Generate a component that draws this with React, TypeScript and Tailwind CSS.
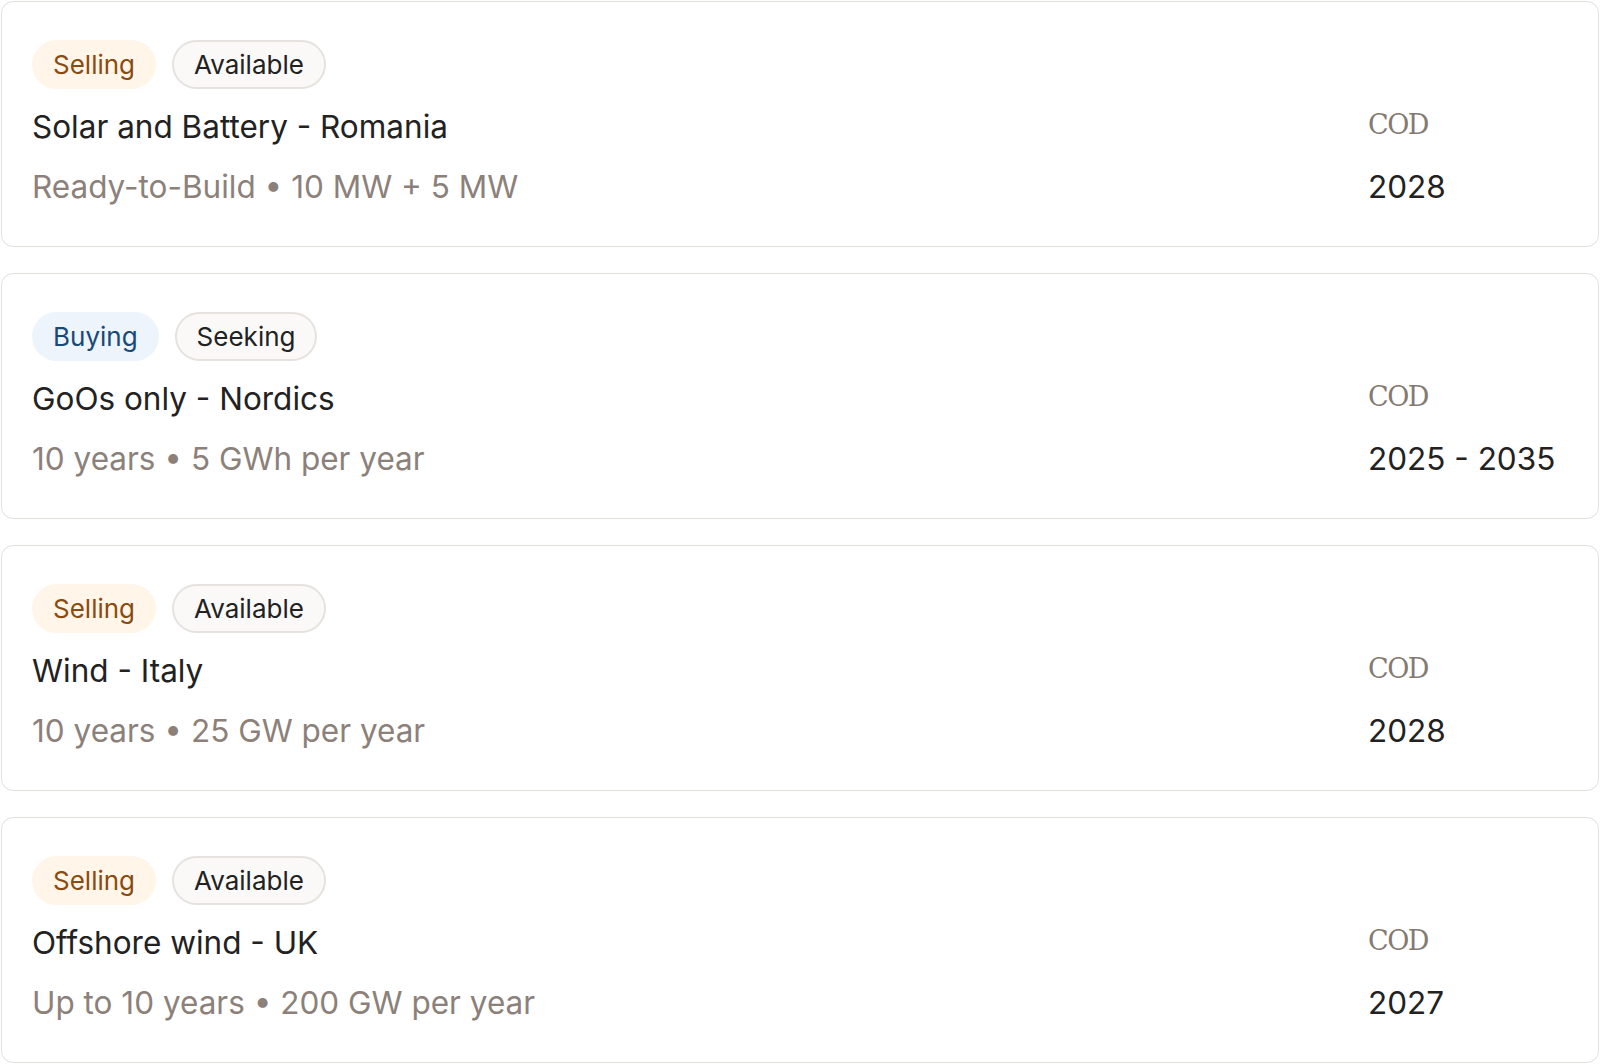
import React from 'react';

type Listing = {
  side: 'Selling' | 'Buying';
  status: string;
  title: string;
  meta: [string, string];
  cod: string;
};

const listings: Listing[] = [
  { side: 'Selling', status: 'Available', title: 'Solar and Battery - Romania', meta: ['Ready-to-Build', '10 MW + 5 MW'], cod: '2028' },
  { side: 'Buying', status: 'Seeking', title: 'GoOs only - Nordics', meta: ['10 years', '5 GWh per year'], cod: '2025 - 2035' },
  { side: 'Selling', status: 'Available', title: 'Wind - Italy', meta: ['10 years', '25 GW per year'], cod: '2028' },
  { side: 'Selling', status: 'Available', title: 'Offshore wind - UK', meta: ['Up to 10 years', '200 GW per year'], cod: '2027' },
];

const ListingCard: React.FC<{ item: Listing }> = ({ item }) => {
  const sideClass =
    item.side === 'Selling'
      ? 'bg-[#fff6e9] text-[#8a4a10]'
      : 'bg-[#edf4fb] text-[#174a78]';

  return (
    <div className="flex h-[246px] rounded-xl border border-[#e4e0dc] bg-white pl-[30px] pr-[32px] pt-[38px]">
      <div className="flex flex-1 flex-col">
        <div className="flex items-center gap-[16px]">
          <span className={`flex h-[49px] items-center rounded-full px-[21px] text-[26px] ${sideClass}`}>
            {item.side}
          </span>
          <span className="flex h-[49px] items-center rounded-full border-2 border-[#e6e2de] bg-[#faf9f7] px-[20px] text-[26px] text-[#222]">
            {item.status}
          </span>
        </div>
        <div className="mt-[19px] text-[31.5px] leading-[38px] text-[#222]">{item.title}</div>
        <div className="mt-[22px] text-[31.5px] leading-[38px] text-[#8c817a]">
          {item.meta[0]} • {item.meta[1]}
        </div>
      </div>
      <div className="flex w-[198px] flex-col pt-[66px]">
        <div className="font-['DejaVu_Serif',serif] text-[27px] leading-[38px] tracking-[-1.5px] text-[#857a73]">COD</div>
        <div className="mt-[24px] text-[31.5px] leading-[38px] text-[#222]">{item.cod}</div>
      </div>
    </div>
  );
};

export default function App() {
  return (
    <div className="flex min-h-screen flex-col gap-[26px] bg-white px-[1px] pt-[1px] font-['Inter',sans-serif]">
      {listings.map((l) => (
        <ListingCard key={l.title} item={l} />
      ))}
    </div>
  );
}
